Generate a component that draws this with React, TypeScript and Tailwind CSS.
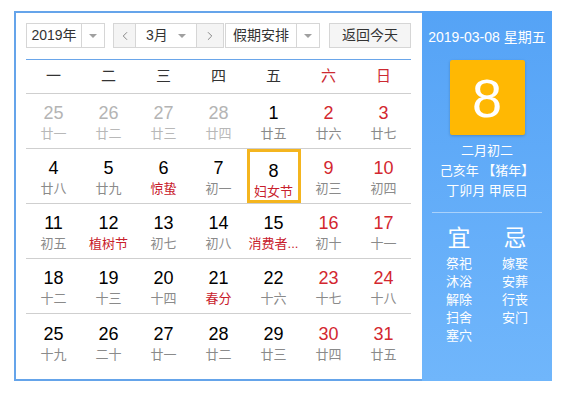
import { ChevronLeft, ChevronRight } from "lucide-react";

type Day = {
  n: number;
  lunar: string;
  other?: boolean; // day from previous month
  weekend?: boolean;
  festival?: boolean;
  selected?: boolean;
};

const weeks: Day[][] = [
  [
    { n: 25, lunar: "廿一", other: true },
    { n: 26, lunar: "廿二", other: true },
    { n: 27, lunar: "廿三", other: true },
    { n: 28, lunar: "廿四", other: true },
    { n: 1, lunar: "廿五" },
    { n: 2, lunar: "廿六", weekend: true },
    { n: 3, lunar: "廿七", weekend: true },
  ],
  [
    { n: 4, lunar: "廿八" },
    { n: 5, lunar: "廿九" },
    { n: 6, lunar: "惊蛰", festival: true },
    { n: 7, lunar: "初一" },
    { n: 8, lunar: "妇女节", festival: true, selected: true },
    { n: 9, lunar: "初三", weekend: true },
    { n: 10, lunar: "初四", weekend: true },
  ],
  [
    { n: 11, lunar: "初五" },
    { n: 12, lunar: "植树节", festival: true },
    { n: 13, lunar: "初七" },
    { n: 14, lunar: "初八" },
    { n: 15, lunar: "消费者...", festival: true },
    { n: 16, lunar: "初十", weekend: true },
    { n: 17, lunar: "十一", weekend: true },
  ],
  [
    { n: 18, lunar: "十二" },
    { n: 19, lunar: "十三" },
    { n: 20, lunar: "十四" },
    { n: 21, lunar: "春分", festival: true },
    { n: 22, lunar: "十六" },
    { n: 23, lunar: "十七", weekend: true },
    { n: 24, lunar: "十八", weekend: true },
  ],
  [
    { n: 25, lunar: "十九" },
    { n: 26, lunar: "二十" },
    { n: 27, lunar: "廿一" },
    { n: 28, lunar: "廿二" },
    { n: 29, lunar: "廿三" },
    { n: 30, lunar: "廿四", weekend: true },
    { n: 31, lunar: "廿五", weekend: true },
  ],
];

const weekdays = ["一", "二", "三", "四", "五", "六", "日"];

const good = ["祭祀", "沐浴", "解除", "扫舍", "塞穴"];
const bad = ["嫁娶", "安葬", "行丧", "安门"];

function Caret() {
  return (
    <span className="h-0 w-0 border-x-[4px] border-t-[4px] border-x-transparent border-t-[#a0a0a0]" />
  );
}

function Select({ label, width }: { label: string; width: string }) {
  return (
    <div className={`flex h-[25px] ${width} border border-[#d6d6d6] bg-white`}>
      <span className="flex flex-1 items-center justify-center text-[14px] text-[#333]">
        {label}
      </span>
      <span className="flex w-[23px] items-center justify-center border-l border-[#d6d6d6]">
        <Caret />
      </span>
    </div>
  );
}

function DayCell({ d }: { d: Day }) {
  const numColor = d.other
    ? "text-[#b4b4b4]"
    : d.weekend
      ? "text-[#d3272f]"
      : "text-black";
  const lunarColor = d.festival
    ? "text-[#c8202c]"
    : d.other
      ? "text-[#b8b8b8]"
      : "text-[#8a8a8a]";
  return (
    <div className="flex items-center justify-center">
      <div
        className={`flex h-[54px] w-[54px] flex-col items-center pt-[7px] ${
          d.selected ? "border-[3px] border-[#f4b51f] pt-[4px]" : ""
        }`}
      >
        <span className={`text-[18px] leading-[24px] ${numColor}`}>{d.n}</span>
        <span className={`whitespace-nowrap text-[13px] leading-[17px] ${lunarColor}`}>
          {d.lunar}
        </span>
      </div>
    </div>
  );
}

export default function App() {
  return (
    <div
      className="flex pl-[14px] pt-[11px]"
      style={{ fontFamily: '"Liberation Sans", "Noto Sans CJK SC", sans-serif' }}
    >
      <div className="flex h-[370px] w-[408px] flex-col border-y-2 border-l-2 border-[#65a4ea] bg-white pl-[10px] pr-[11px] pt-[10px]">
        {/* toolbar */}
        <div className="flex h-[25px] items-center">
          <Select label="2019年" width="w-[79px]" />
          <div className="ml-[8px] flex h-[25px] w-[111px] border border-[#d6d6d6] bg-white">
            <span className="flex w-[22px] items-center justify-center border-r border-[#d6d6d6] bg-[#f4f4f4] text-[#666]">
              <ChevronLeft size={14} strokeWidth={1.3} />
            </span>
            <span className="flex flex-1 items-center justify-between pl-[10px] pr-[10px] text-[14px] text-[#333]">
              3月
              <Caret />
            </span>
            <span className="flex w-[27px] items-center justify-center border-l border-[#d6d6d6] bg-[#f4f4f4] text-[#666]">
              <ChevronRight size={14} strokeWidth={1.3} />
            </span>
          </div>
          <div className="ml-[1px]">
            <Select label="假期安排" width="w-[95px]" />
          </div>
          <button className="ml-[9px] flex h-[25px] w-[82px] items-center justify-center border border-[#d6d6d6] bg-[#f5f5f5] text-[14px] text-[#333]">
            返回今天
          </button>
        </div>

        {/* week header */}
        <div className="mt-[11px] grid h-[35px] grid-cols-7 border-y border-t-[#6aa6ea] border-b-[#cfcfcf]">
          {weekdays.map((w, i) => (
            <span
              key={w}
              className={`flex items-center justify-center text-[15px] ${
                i >= 5 ? "text-[#cc2a32]" : "text-[#333]"
              }`}
            >
              {w}
            </span>
          ))}
        </div>

        {/* days */}
        {weeks.map((row, i) => (
          <div
            key={i}
            className={`grid h-[55px] grid-cols-7 ${
              i < weeks.length - 1 ? "border-b border-[#cfcfcf]" : ""
            }`}
          >
            {row.map((d, j) => (
              <DayCell key={j} d={d} />
            ))}
          </div>
        ))}
      </div>

      {/* side panel */}
      <div className="flex h-[370px] w-[130px] flex-col items-center bg-gradient-to-b from-[#55a3f6] to-[#70b6fb] text-white">
        <div className="mt-[17px] text-[14px] leading-[18px]">2019-03-08 星期五</div>
        <div className="mt-[14px] flex h-[75px] w-[75px] items-center justify-center rounded-[2px] bg-[#ffb803] text-[54px] leading-none shadow-[0_1px_3px_rgba(0,0,0,0.2)]">
          8
        </div>
        <div className="mt-[6px] flex flex-col items-center text-[13px] leading-[20px]">
          <span>二月初二</span>
          <span>己亥年 【猪年】</span>
          <span>丁卯月 甲辰日</span>
        </div>
        <div className="mt-[11px] h-px w-[110px] bg-[#a9d2fb]" />
        <div className="mt-[12px] flex w-full justify-center gap-[30px]">
          <div className="flex flex-col items-center">
            <span className="text-[23px] leading-[26px]">宜</span>
            <div className="mt-[4px] flex flex-col items-center text-[13px] leading-[18px]">
              {good.map((g) => (
                <span key={g}>{g}</span>
              ))}
            </div>
          </div>
          <div className="flex flex-col items-center">
            <span className="text-[23px] leading-[26px]">忌</span>
            <div className="mt-[4px] flex flex-col items-center text-[13px] leading-[18px]">
              {bad.map((g) => (
                <span key={g}>{g}</span>
              ))}
            </div>
          </div>
        </div>
      </div>
    </div>
  );
}
